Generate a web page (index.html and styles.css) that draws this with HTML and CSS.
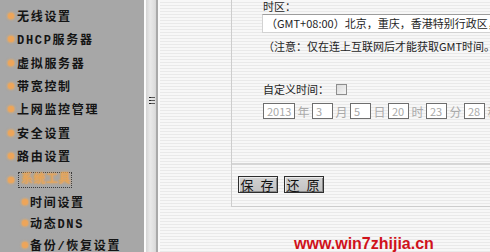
FILE: index.html
```html
<!DOCTYPE html>
<html lang="zh-CN">
<head>
<meta charset="utf-8">
<title>时间设置</title>
<link rel="stylesheet" href="styles.css">
</head>
<body>
<div class="frame">
  <nav class="sidebar">
    <ul class="menu">
      <li class="item"><span class="dot"></span><span class="label">无线设置</span></li>
      <li class="item"><span class="dot"></span><span class="label">DHCP服务器</span></li>
      <li class="item"><span class="dot"></span><span class="label">虚拟服务器</span></li>
      <li class="item"><span class="dot"></span><span class="label">带宽控制</span></li>
      <li class="item"><span class="dot"></span><span class="label">上网监控管理</span></li>
      <li class="item"><span class="dot"></span><span class="label">安全设置</span></li>
      <li class="item"><span class="dot"></span><span class="label">路由设置</span></li>
      <li class="item active"><span class="dot"></span><span class="label focus">系统工具</span></li>
      <li class="sub"><span class="dot"></span><span class="label">时间设置</span></li>
      <li class="sub"><span class="dot"></span><span class="label">动态DNS</span></li>
      <li class="sub"><span class="dot"></span><span class="label">备份/恢复设置</span></li>
    </ul>
  </nav>
  <div class="splitter">
    <div class="grip"><i></i><i></i><i></i></div>
  </div>
  <main class="main">
    <section class="panel">
      <div class="fields">
        <div class="line">时区：</div>
        <div class="select">（GMT+08:00）北京，重庆，香港特别行政区，</div>
        <div class="line note">（注意：仅在连上互联网后才能获取GMT时间。</div>
        <div class="line custom">自定义时间：<span class="check"></span></div>
        <div class="date">
          <span class="box wide">2013</span><span class="unit">年</span>
          <span class="box">3</span><span class="unit">月</span>
          <span class="box">5</span><span class="unit">日</span>
          <span class="box">20</span><span class="unit">时</span>
          <span class="box">23</span><span class="unit">分</span>
          <span class="box">28</span><span class="unit">秒</span>
        </div>
      </div>
      <div class="actions">
        <button class="btn">保 存</button>
        <button class="btn">还 原</button>
      </div>
    </section>
    <div class="watermark">www.win7zhijia.cn</div>
  </main>
</div>
</body>
</html>
```
FILE: styles.css
```css
* { box-sizing: border-box; }
html, body { margin: 0; padding: 0; }
body {
  width: 490px;
  height: 252px;
  overflow: hidden;
  font-family: "Noto Sans CJK SC", "Noto Sans", sans-serif;
}
.frame {
  display: flex;
  width: 490px;
  height: 252px;
}
.sidebar {
  width: 144px;
  flex: none;
  background: #a7a7a7;
  padding-top: 4px;
}
.menu {
  list-style: none;
  margin: 0;
  padding: 0;
}
.item, .sub {
  display: flex;
  align-items: center;
  font-family: "Liberation Mono", "Noto Sans CJK SC", monospace;
  font-weight: bold;
  font-size: 12px;
  letter-spacing: 1.7px;
  color: #141414;
  white-space: nowrap;
}
.item { height: 23.43px; padding-left: 8px; }
.sub { height: 21.25px; padding-left: 22px; }
.dot {
  width: 6px;
  height: 6px;
  border-radius: 50%;
  background: #eda55a;
  box-shadow: 0 0 2px 1px rgba(240, 170, 90, 0.7);
  flex: none;
}
.item .dot { margin-right: 3px; }
.sub .dot { margin-right: 2px; }
.focus {
  width: 54px;
  height: 16px;
  margin-left: 1px;
  border: 1px dotted #3a3a3a;
  line-height: 14px;
  padding-left: 2px;
  letter-spacing: 0.5px;
  color: rgba(240, 165, 80, 0.55);
  text-shadow: 0 0 3px #f2a448;
}
.splitter {
  width: 16px;
  flex: none;
  border-left: 2px solid #fbfbfb;
  border-right: 2px solid #fafafa;
  background: linear-gradient(to right, #d4d4d4 0, #e9e9e9 35%, #dedede 70%, #d6d6d6 83%, #a9a9a9 83%, #a9a9a9 100%);
  padding-top: 97px;
  padding-left: 3px;
}
.grip {
  display: flex;
  flex-direction: column;
  gap: 2px;
  width: 7px;
}
.grip i {
  display: block;
  height: 1px;
  width: 6px;
  background: #5a5a5a;
  border-left: 2px solid #222;
}
.main {
  flex: 1;
  position: relative;
  overflow: hidden;
  background: repeating-linear-gradient(to bottom, #f7f7f7 0, #f7f7f7 2px, #e9e9e9 2px, #e9e9e9 3px);
  padding-left: 71px;
}
.panel {
  border-left: 1px solid #cdcdcd;
  border-bottom: 1px solid #cdcdcd;
  height: 207px;
}
.fields {
  padding-left: 31px;
  height: 165px;
  border-bottom: 2px solid #d6d6d6;
  font-size: 11px;
  color: #1e1e1e;
}
.line {
  height: 12px;
  line-height: 12px;
  white-space: nowrap;
}
.select {
  margin-top: 2px;
  margin-left: -1px;
  width: 300px;
  height: 19px;
  line-height: 17px;
  background: #ffffff;
  border: 1px solid #d2d2d2;
  border-top-color: #9c9c9c;
  padding-left: 3px;
  white-space: nowrap;
  overflow: hidden;
}
.note { margin-top: 7px; }
.custom {
  margin-top: 31px;
  display: flex;
  align-items: center;
}
.check {
  width: 11px;
  height: 11px;
  margin-left: 7px;
  border: 1px solid #8e8e8e;
  background: linear-gradient(135deg, #dcdcdc, #f4f4f4);
}
.date {
  margin-top: 8px;
  display: flex;
  align-items: center;
  height: 16px;
  white-space: nowrap;
}
.box {
  width: 21px;
  height: 16px;
  border: 1px solid #6e6e6e;
  background: #ffffff;
  color: #a8a8a8;
  font-size: 11px;
  line-height: 14px;
  padding-left: 3px;
  flex: none;
}
.box.wide { width: 32px; }
.unit {
  font-size: 12px;
  color: #aaaaaa;
  width: 17px;
  text-align: center;
  flex: none;
}
.actions {
  display: flex;
  gap: 6px;
  padding: 11px 0 0 6px;
}
.btn {
  width: 40px;
  height: 17px;
  padding: 0;
  margin: 0;
  font-family: "Noto Sans CJK SC", sans-serif;
  font-size: 13px;
  line-height: 13px;
  letter-spacing: 2px;
  color: #111;
  background: linear-gradient(#d2d2d2, #c2c2c2);
  border: 1px solid #2e2e2e;
  box-shadow: inset 1px 1px 0 #ececec, inset -1px -1px 0 #8a8a8a;
}
.watermark {
  position: absolute;
  left: 134px;
  top: 235px;
  font-family: "Liberation Sans", Arial, sans-serif;
  font-weight: bold;
  font-size: 16px;
  line-height: 18px;
  color: #d0121b;
  white-space: nowrap;
}
```
